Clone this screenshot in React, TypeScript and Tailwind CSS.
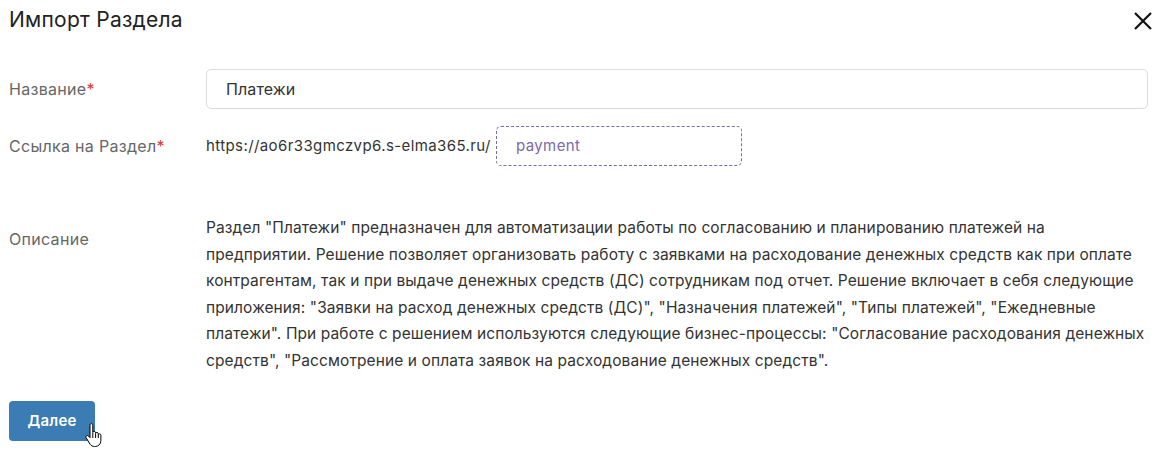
import React from "react";

const descriptionLines = [
  'Раздел "Платежи" предназначен для автоматизации работы по согласованию и планированию платежей на',
  "предприятии. Решение позволяет организовать работу с заявками на расходование денежных средств как при оплате",
  "контрагентам, так и при выдаче денежных средств (ДС) сотрудникам под отчет. Решение включает в себя следующие",
  'приложения: "Заявки на расход денежных средств (ДС)", "Назначения платежей", "Типы платежей", "Ежедневные',
  'платежи". При работе с решением используются следующие бизнес-процессы: "Согласование расходования денежных',
  'средств", "Рассмотрение и оплата заявок на расходование денежных средств".',
];

function HandCursor() {
  return (
    <svg width="18" height="24" viewBox="0 0 18 24" className="absolute left-[76px] top-[22px]">
      <path
        d="M5 2.2c0-.9.6-1.5 1.4-1.5s1.4.6 1.4 1.5v7.3c.2-.7.8-1.1 1.4-1.1.8 0 1.4.6 1.4 1.4v.6c.2-.6.7-1 1.3-1 .8 0 1.4.6 1.4 1.4v.8c.2-.5.7-.8 1.2-.8.8 0 1.4.6 1.4 1.4v5.5c0 3.2-2.4 5.8-5.6 5.8H9.5c-1.8 0-3.3-.8-4.4-2.2L1.2 14.8c-.5-.7-.3-1.6.4-2 .6-.4 1.4-.3 1.9.3L5 14.7V2.2z"
        fill="#fff"
        stroke="#000"
        strokeWidth="1"
        strokeLinejoin="round"
      />
      <path d="M7.8 10v5M10.6 10.6v4.4M13.3 11.6v3.4" stroke="#000" strokeWidth="1" />
    </svg>
  );
}

export default function App() {
  return (
    <div
      className="w-[1165px] h-[453px] bg-white text-[#333] overflow-hidden"
      style={{ fontFamily: "Inter, 'Noto Sans', sans-serif" }}
    >
      <div className="flex items-center justify-between pl-[9px] pr-[12px] pt-[4px] h-[36px]">
        <h1 className="text-[21px] font-normal text-[#222] tracking-[0.25px]">Импорт Раздела</h1>
        <svg width="20" height="20" viewBox="0 0 20 20" className="mt-[1px]">
          <path d="M2 2L18 18M18 2L2 18" stroke="#111" strokeWidth="2.2" />
        </svg>
      </div>

      <div className="pl-[9px] pr-[17px] mt-[33px]">
        <div className="flex items-center h-[40px]">
          <div className="w-[197px] text-[16px] text-[#666] tracking-[0.3px]">
            Название<span className="text-[#e5332a]">*</span>
          </div>
          <div className="flex-1 h-[40px] border border-[#dcdcdc] rounded-[5px] flex items-center px-[19px] text-[16px] text-[#333] tracking-[0.1px]">
            Платежи
          </div>
        </div>

        <div className="flex items-center h-[40px] mt-[17px]">
          <div className="w-[197px] text-[16px] text-[#666] tracking-[0.3px]">
            Ссылка на Раздел<span className="text-[#e5332a]">*</span>
          </div>
          <div className="text-[15px] text-[#333] mr-[5px] tracking-[0.4px]">
            https://ao6r33gmczvp6.s-elma365.ru/
          </div>
          <div className="w-[246px] h-[40px] border border-dashed border-[#7b6aa8] rounded-[5px] flex items-center px-[19px] text-[15px] text-[#7b6aa8] tracking-[0.4px]">
            payment
          </div>
        </div>

        <div className="flex mt-[49px]">
          <div className="w-[197px] text-[16px] text-[#666] pt-[12px] shrink-0 tracking-[0.3px]">Описание</div>
          <div className="flex-1 text-[15.5px] leading-[26.5px] text-[#333] tracking-[0.1px]">
            {descriptionLines.map((line) => (
              <div key={line} className="whitespace-nowrap">
                {line}
              </div>
            ))}
          </div>
        </div>

        <div className="relative mt-[27px]">
          <button className="w-[86px] h-[40px] rounded-[4px] bg-[#3a7cb3] text-white text-[15px] font-semibold tracking-[0.2px]">
            Далее
          </button>
          <HandCursor />
        </div>
      </div>
    </div>
  );
}
